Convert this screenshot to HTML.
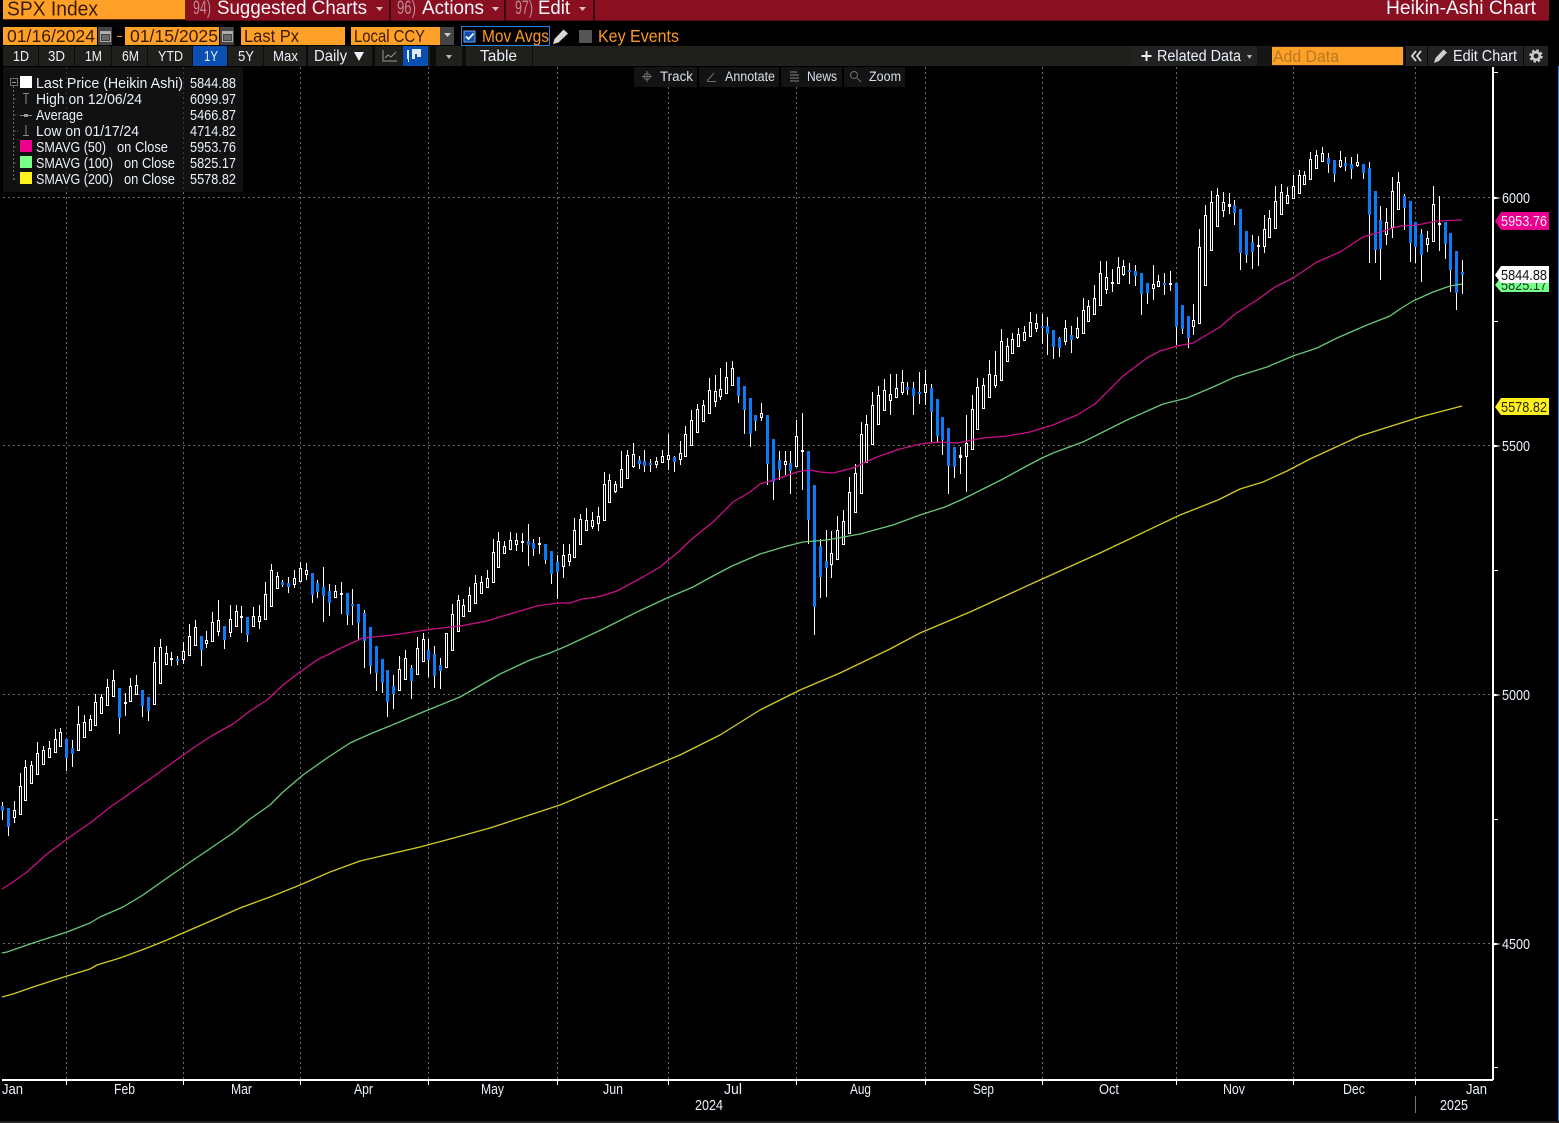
<!DOCTYPE html>
<html><head><meta charset="utf-8"><title>SPX Index Heikin-Ashi Chart</title>
<style>
html,body{margin:0;padding:0;background:#000;width:1559px;height:1123px;overflow:hidden}
svg{display:block;position:absolute;left:0;top:0}
text{font-family:"Liberation Sans",sans-serif;white-space:pre}
.l{fill:#eaf0fa;font-size:15px}
.d{fill:#3a1c00}
.o{fill:#ff9a1e}
.w{fill:#f8f8fc}
.n{fill:#b98a96}
</style></head><body>
<svg width="1559" height="1123" viewBox="0 0 1559 1123" xmlns="http://www.w3.org/2000/svg">
<rect width="1559" height="1123" fill="#000"/>
<!-- grid -->
<g stroke="#6a6a6a" stroke-width="1" stroke-dasharray="2 3" fill="none" shape-rendering="crispEdges">
<path d="M3 197.5H1493M3 445.5H1493M3 694.5H1493M3 943.5H1493"/>
<path d="M66.5 67V1079M183.5 67V1079M300.5 67V1079M428.5 67V1079M557.5 67V1079M668.5 67V1079M796.5 67V1079M925.5 67V1079M1042.5 67V1079M1176.5 67V1079M1293.5 67V1079M1415.5 67V1079"/>
</g>
<!-- candles -->
<g id="c" shape-rendering="crispEdges"></g>
<!-- moving averages -->
<g fill="none" stroke-width="1.3" stroke-linejoin="round">
<polyline stroke="#c9108a" points="2,889 13,882 27,872 47,854 67,839 90,823 113,805 125,797 137,788 153,777 172,763 193,748 213,735 233,724 250,711 267,700 283,685 300,672 317,660 343,647 363,638 393,635 413,632 433,629 460,626 487,621 503,616 537,606 557,603 570,603 582,599 598,597 617,591 643,577 660,567 677,553 693,538 713,522 733,502 750,492 760,484 780,478 797,472 810,470 820,472 833,473 853,468 877,457 900,449 920,444 940,442 957,443 983,438 1007,436 1030,432 1053,425 1077,415 1095,404 1123,376 1147,358 1160,351 1177,346 1193,343 1220,327 1235,314 1257,300 1275,287 1293,278 1317,262 1340,252 1363,237 1380,232 1400,226 1417,225 1437,221 1462,220"/>
<polyline stroke="#68c878" points="2,953 7,952 33,943 67,932 90,923 100,917 123,907 143,895 167,878 183,867 233,833 250,819 270,805 283,792 303,775 327,758 350,743 370,734 397,723 423,712 460,697 500,674 530,660 550,653 562,648 573,643 603,629 637,612 667,598 693,587 713,576 732,566 760,554 787,546 803,542 827,540 860,534 893,525 920,515 945,507 963,499 1003,479 1023,468 1040,459 1053,453 1083,442 1107,430 1127,420 1163,404 1187,398 1213,387 1235,377 1267,367 1293,356 1317,348 1337,338 1367,325 1390,316 1400,309 1413,301 1433,292 1450,286 1462,284"/>
<polyline stroke="#d2cc22" points="2,997 13,994 33,987 67,976 90,969 97,965 120,958 147,948 167,940 183,933 213,920 240,908 270,897 300,885 330,872 360,861 420,847 450,839 490,828 560,805 620,780 680,755 720,735 760,710 800,690 840,673 890,649 920,633 970,612 1040,580 1100,553 1180,515 1218,500 1240,489 1263,482 1287,471 1310,459 1360,436 1420,417 1462,406"/>
</g>
<!-- axes -->
<g fill="#fff" shape-rendering="crispEdges">
<rect x="1492" y="67" width="2" height="1013"/>
<rect x="2" y="1079" width="1491" height="2"/>
<path d="M66 1080h1v5h-1zM183 1080h1v5h-1zM300 1080h1v5h-1zM428 1080h1v5h-1zM557 1080h1v5h-1zM668 1080h1v5h-1zM796 1080h1v5h-1zM925 1080h1v5h-1zM1042 1080h1v5h-1zM1176 1080h1v5h-1zM1293 1080h1v5h-1zM1415 1080h1v5h-1z"/>
<path d="M1494 72h4v1h-4zM1494 321h4v1h-4zM1494 570h4v1h-4zM1494 819h4v1h-4zM1494 1067h4v1h-4z"/>
</g>
<path d="M1493 196.500l8 1.500-8 1.500z M1493 444.500l8 1.500-8 1.500z M1493 693.500l8 1.500-8 1.500z M1493 942.500l8 1.500-8 1.500z" fill="#fff"/>
<rect x="1415" y="1096" width="1" height="17" fill="#777"/>
<rect x="1558" y="66" width="1" height="1055" fill="#3d78b8"/>
<rect x="0" y="1121" width="1559" height="2" fill="#222"/>
<text class="l" x="1502" y="203" textLength="28" lengthAdjust="spacingAndGlyphs">6000</text>
<text class="l" x="1502" y="451" textLength="28" lengthAdjust="spacingAndGlyphs">5500</text>
<text class="l" x="1502" y="700" textLength="28" lengthAdjust="spacingAndGlyphs">5000</text>
<text class="l" x="1502" y="949" textLength="28" lengthAdjust="spacingAndGlyphs">4500</text>
<!-- badges -->
<path d="M1495 221l6-9h48v18h-48z" fill="#e8008f"/>
<text x="1501" y="226" font-size="15" fill="#ffe9f6" textLength="46" lengthAdjust="spacingAndGlyphs">5953.76</text>
<path d="M1495 285l6-8h48v15h-48z" fill="#78ff8a"/>
<text x="1501" y="290" font-size="15" fill="#1b3a20" textLength="46" lengthAdjust="spacingAndGlyphs">5825.17</text>
<path d="M1495 275l6-9h48v17h-48z" fill="#fff"/>
<text x="1501" y="280" font-size="15" fill="#111" textLength="46" lengthAdjust="spacingAndGlyphs">5844.88</text>
<path d="M1495 407l6-9h48v17h-48z" fill="#fff01e"/>
<text x="1501" y="412" font-size="15" fill="#2a2a00" textLength="46" lengthAdjust="spacingAndGlyphs">5578.82</text>
<!-- bottom labels -->
<g class="x">
<text class="l" x="2" y="1094" textLength="21" lengthAdjust="spacingAndGlyphs">Jan</text>
<text class="l" x="114" y="1094" textLength="21" lengthAdjust="spacingAndGlyphs">Feb</text>
<text class="l" x="231" y="1094" textLength="21" lengthAdjust="spacingAndGlyphs">Mar</text>
<text class="l" x="354" y="1094" textLength="19" lengthAdjust="spacingAndGlyphs">Apr</text>
<text class="l" x="481" y="1094" textLength="23" lengthAdjust="spacingAndGlyphs">May</text>
<text class="l" x="603" y="1094" textLength="20" lengthAdjust="spacingAndGlyphs">Jun</text>
<text class="l" x="724" y="1094" textLength="18" lengthAdjust="spacingAndGlyphs">Jul</text>
<text class="l" x="850" y="1094" textLength="21" lengthAdjust="spacingAndGlyphs">Aug</text>
<text class="l" x="973" y="1094" textLength="21" lengthAdjust="spacingAndGlyphs">Sep</text>
<text class="l" x="1099" y="1094" textLength="20" lengthAdjust="spacingAndGlyphs">Oct</text>
<text class="l" x="1223" y="1094" textLength="22" lengthAdjust="spacingAndGlyphs">Nov</text>
<text class="l" x="1343" y="1094" textLength="22" lengthAdjust="spacingAndGlyphs">Dec</text>
<text class="l" x="1466" y="1094" textLength="21" lengthAdjust="spacingAndGlyphs">Jan</text>
<text class="l" x="695" y="1110" textLength="28" lengthAdjust="spacingAndGlyphs">2024</text>
<text class="l" x="1440" y="1110" textLength="28" lengthAdjust="spacingAndGlyphs">2025</text>
</g>
<!-- legend -->
<rect x="3" y="67" width="240" height="125" rx="2" fill="#1b1b1b" fill-opacity=".62"/>
<g shape-rendering="crispEdges">
<rect x="10.500" y="78.500" width="7" height="7" fill="none" stroke="#707070"/><rect x="12" y="82" width="4" height="1" fill="#999"/>
<path d="M13.500 86V180M13.500 99H18M13.500 115H18M13.500 131H18M13.500 147H18M13.500 163H18M13.500 179H18" stroke="#666" stroke-dasharray="2 2" fill="none"/>
<rect x="20" y="76" width="12" height="12" fill="#fff"/>
<rect x="20" y="140" width="12" height="12" fill="#ee008c"/>
<rect x="20" y="156" width="12" height="12" fill="#78ff8a"/>
<rect x="20" y="172" width="12" height="12" fill="#fff01e"/>
<path d="M23 93.500h6M26 94v10" stroke="#888" fill="none"/>
<path d="M20 115.500h12" stroke="#888" fill="none"/><rect x="24" y="114" width="4" height="3" fill="#999"/>
<path d="M26 125v10M23 135.500h6" stroke="#888" fill="none"/>
</g>
<g>
<text class="l" x="36" y="88" textLength="147" lengthAdjust="spacingAndGlyphs">Last Price (Heikin Ashi)</text>
<text class="l" x="36" y="104" textLength="106" lengthAdjust="spacingAndGlyphs">High on 12/06/24</text>
<text class="l" x="36" y="120" textLength="47" lengthAdjust="spacingAndGlyphs">Average</text>
<text class="l" x="36" y="136" textLength="103" lengthAdjust="spacingAndGlyphs">Low on 01/17/24</text>
<text class="l" x="36" y="152" textLength="70" lengthAdjust="spacingAndGlyphs">SMAVG (50)</text>
<text class="l" x="117" y="152" textLength="51" lengthAdjust="spacingAndGlyphs">on Close</text>
<text class="l" x="36" y="168" textLength="77" lengthAdjust="spacingAndGlyphs">SMAVG (100)</text>
<text class="l" x="124" y="168" textLength="51" lengthAdjust="spacingAndGlyphs">on Close</text>
<text class="l" x="36" y="184" textLength="77" lengthAdjust="spacingAndGlyphs">SMAVG (200)</text>
<text class="l" x="124" y="184" textLength="51" lengthAdjust="spacingAndGlyphs">on Close</text>
<text class="l" x="190" y="88" textLength="46" lengthAdjust="spacingAndGlyphs">5844.88</text>
<text class="l" x="190" y="104" textLength="46" lengthAdjust="spacingAndGlyphs">6099.97</text>
<text class="l" x="190" y="120" textLength="46" lengthAdjust="spacingAndGlyphs">5466.87</text>
<text class="l" x="190" y="136" textLength="46" lengthAdjust="spacingAndGlyphs">4714.82</text>
<text class="l" x="190" y="152" textLength="46" lengthAdjust="spacingAndGlyphs">5953.76</text>
<text class="l" x="190" y="168" textLength="46" lengthAdjust="spacingAndGlyphs">5825.17</text>
<text class="l" x="190" y="184" textLength="46" lengthAdjust="spacingAndGlyphs">5578.82</text>
</g>
<!-- top red bar -->
<g shape-rendering="crispEdges">
<rect x="186" y="0" width="1363" height="20" fill="#8a0f20"/>
<rect x="186" y="20" width="1363" height="1" fill="#5a0a14"/>
<rect x="389" y="0" width="2" height="21" fill="#3a0810"/>
<rect x="504" y="0" width="2" height="21" fill="#3a0810"/>
<rect x="593" y="0" width="2" height="21" fill="#3a0810"/>
<rect x="3" y="0" width="183" height="20" fill="#5a3000"/>
<rect x="3" y="0" width="182" height="19" fill="#ffa028"/>
</g>
<text class="d" x="7" y="15.500" font-size="20.500" textLength="91" lengthAdjust="spacingAndGlyphs">SPX Index</text>
<text class="n" x="193" y="14" font-size="19.500" textLength="18" lengthAdjust="spacingAndGlyphs">94)</text>
<text class="w" x="217" y="14" font-size="19.500" textLength="150" lengthAdjust="spacingAndGlyphs">Suggested Charts</text>
<path d="M376 7h7l-3.500 4z" fill="#d8c0c6"/>
<text class="n" x="397" y="14" font-size="19.500" textLength="19" lengthAdjust="spacingAndGlyphs">96)</text>
<text class="w" x="422" y="14" font-size="19.500" textLength="62" lengthAdjust="spacingAndGlyphs">Actions</text>
<path d="M492 7h7l-3.500 4z" fill="#d8c0c6"/>
<text class="n" x="515" y="14" font-size="19.500" textLength="18" lengthAdjust="spacingAndGlyphs">97)</text>
<text class="w" x="538" y="14" font-size="19.500" textLength="32" lengthAdjust="spacingAndGlyphs">Edit</text>
<path d="M579 7h7l-3.500 4z" fill="#d8c0c6"/>
<text class="w" x="1386" y="14" font-size="19.500" textLength="150" lengthAdjust="spacingAndGlyphs">Heikin-Ashi Chart</text>
<!-- row 2 -->
<g shape-rendering="crispEdges">
<rect x="3" y="27" width="94" height="18" fill="#ffa028"/>
<rect x="98" y="27" width="14" height="18" fill="#444"/>
<rect x="125" y="27" width="94" height="18" fill="#ffa028"/>
<rect x="220" y="27" width="14" height="18" fill="#444"/>
<rect x="241" y="27" width="104" height="18" fill="#ffa028"/>
<rect x="351" y="27" width="89" height="18" fill="#ffa028"/>
<rect x="440" y="27" width="14" height="18" fill="#444"/>
<rect x="461.500" y="26.500" width="88" height="19" fill="#000" stroke="#2a7fd8"/>
<rect x="464" y="31" width="11" height="11" fill="#0b4fb0" stroke="#7aa8e0"/>
<rect x="579" y="30" width="13" height="13" fill="#555"/>
<rect x="117" y="36" width="5" height="1" fill="#ff9a1e"/>
<path d="M100.500 31.500h10v10h-10zM222.500 31.500h10v10h-10z" fill="none" stroke="#a8a8a8"/>
<path d="M101 32h9v2h-9zM223 32h9v2h-9z" fill="#b0b0b0"/>
<path d="M102 35h7v5h-7zM224 35h7v5h-7z" fill="#6a6a6a"/>
</g>
<text class="d" x="7" y="42" font-size="17.500" textLength="88" lengthAdjust="spacingAndGlyphs">01/16/2024</text>
<text class="d" x="130" y="42" font-size="17.500" textLength="88" lengthAdjust="spacingAndGlyphs">01/15/2025</text>
<text class="d" x="244" y="42" font-size="17.500" textLength="55" lengthAdjust="spacingAndGlyphs">Last Px</text>
<text class="d" x="354" y="42" font-size="17.500" textLength="71" lengthAdjust="spacingAndGlyphs">Local CCY</text>
<path d="M444 33h7l-3.500 4z" fill="#ccc"/>
<path d="M466 36.500l2.500 2.500 5-5.500" stroke="#fff" stroke-width="1.800" fill="none"/>
<text class="o" x="482" y="42" font-size="17.500" textLength="67" lengthAdjust="spacingAndGlyphs">Mov Avgs</text>
<path d="M553 44l1.500-5 9-9.500 4.500 4-9.500 9z" fill="#d8d8d8"/>
<text class="o" x="598" y="42" font-size="17.500" textLength="81" lengthAdjust="spacingAndGlyphs">Key Events</text>
<!-- row 3 -->
<g shape-rendering="crispEdges">
<rect x="3" y="46" width="1545" height="20" fill="#1f1f1c"/>
<path d="M38 46h1v20h-1zM74 46h1v20h-1zM111 46h1v20h-1zM147 46h1v20h-1zM192 46h1v20h-1zM227 46h1v20h-1zM263 46h1v20h-1zM306 46h2v20h-2zM372 46h3v20h-3zM430 46h6v20h-6zM462 46h4v20h-4zM532 46h1v20h-1z" fill="#0c0c0c"/>
<rect x="193" y="46" width="34" height="20" fill="#0a50b4"/>
<rect x="403" y="46" width="25" height="20" fill="#0a50b4"/>
<rect x="1133" y="46" width="124" height="20" fill="#222"/>
<rect x="1257" y="46" width="15" height="20" fill="#161616"/>
<rect x="1272" y="47" width="131" height="18" fill="#ffa028"/>
<rect x="1404" y="46" width="2" height="20" fill="#0c0c0c"/>
<rect x="1406" y="46" width="21" height="20" fill="#222"/>
<rect x="1427" y="46" width="1" height="20" fill="#0c0c0c"/>
<rect x="1428" y="46" width="95" height="20" fill="#222"/>
<rect x="1523" y="46" width="1" height="20" fill="#0c0c0c"/>
<rect x="1524" y="46" width="24" height="20" fill="#222"/>
</g>
<g>
<text class="l" x="13" y="61" textLength="16" lengthAdjust="spacingAndGlyphs">1D</text>
<text class="l" x="48" y="61" textLength="17" lengthAdjust="spacingAndGlyphs">3D</text>
<text class="l" x="85" y="61" textLength="17" lengthAdjust="spacingAndGlyphs">1M</text>
<text class="l" x="122" y="61" textLength="17" lengthAdjust="spacingAndGlyphs">6M</text>
<text class="l" x="158" y="61" textLength="25" lengthAdjust="spacingAndGlyphs">YTD</text>
<text class="l" x="204" y="61" textLength="14" lengthAdjust="spacingAndGlyphs">1Y</text>
<text class="l" x="238" y="61" textLength="16" lengthAdjust="spacingAndGlyphs">5Y</text>
<text class="l" x="273" y="61" textLength="25" lengthAdjust="spacingAndGlyphs">Max</text>
<text x="314" y="61" font-size="16" fill="#eaf0fa" textLength="33" lengthAdjust="spacingAndGlyphs">Daily</text>
<path d="M354 52h10l-5 9z" fill="#f0f4fa"/>
<path d="M383 50v11h14M385 58l3-3 3 2 5-5" stroke="#9a9a9a" fill="none"/>
<path d="M407 50h2v9h-2zM408 59h1v3h-1zM412 49h9v8h-4v-3h-2v5h-3z" fill="#dfe8f5"/>
<path d="M446 55h6l-3 4z" fill="#bbb"/>
<text x="480" y="61" font-size="16" fill="#eaf0fa" textLength="37" lengthAdjust="spacingAndGlyphs">Table</text>
<path d="M1146.500 51v10M1141.500 56h10" stroke="#eee" stroke-width="2"/>
<text x="1157" y="61" font-size="15.500" fill="#eaf0fa" textLength="84" lengthAdjust="spacingAndGlyphs">Related Data</text>
<path d="M1247 55h5l-2.500 4z" fill="#bbb"/>
<text x="1273" y="62" font-size="17" fill="#b57a20" textLength="66" lengthAdjust="spacingAndGlyphs">Add Data</text>
<path d="M1416 51l-4 5 4 5M1421 51l-4 5 4 5" stroke="#ddd" stroke-width="1.800" fill="none"/>
<path d="M1434 63l1.500-5 8-8.500 3.500 3-8 8.500z" fill="#cfcfcf"/>
<text x="1453" y="61" font-size="15.500" fill="#eaf0fa" textLength="64" lengthAdjust="spacingAndGlyphs">Edit Chart</text>
<circle cx="1536" cy="56" r="3.800" fill="none" stroke="#ccc" stroke-width="2.600"/>
<circle cx="1536" cy="56" r="5.700" fill="none" stroke="#ccc" stroke-width="2" stroke-dasharray="2.500 2"/>
</g>
<!-- floating toolbar -->
<g shape-rendering="crispEdges" fill="#161616" fill-opacity=".88">
<rect x="634" y="67" width="63" height="20"/><rect x="699" y="67" width="80" height="20"/><rect x="781" y="67" width="61" height="20"/><rect x="844" y="67" width="61" height="20"/>
</g>
<g stroke="#6e6e6e" fill="none">
<circle cx="647" cy="76.500" r="3"/><path d="M647 71v11M642 76.500h10"/>
<path d="M707 81l7-8M707 81.500h9"/>
<path d="M790 72h7M790 75h9M790 78h9M790 81h9" stroke-width="1.300"/>
<circle cx="854" cy="75" r="3.500"/><path d="M857 78l4 4"/>
</g>
<text x="660" y="81" font-size="13.500" fill="#d8e0ea" textLength="33" lengthAdjust="spacingAndGlyphs">Track</text>
<text x="725" y="81" font-size="13.500" fill="#d8e0ea" textLength="50" lengthAdjust="spacingAndGlyphs">Annotate</text>
<text x="807" y="81" font-size="13.500" fill="#d8e0ea" textLength="30" lengthAdjust="spacingAndGlyphs">News</text>
<text x="869" y="81" font-size="13.500" fill="#d8e0ea" textLength="32" lengthAdjust="spacingAndGlyphs">Zoom</text>
</svg>
<script>
var S=[
[0,540,"8,786,798,812,840,b 26,804,805,860,888,b 44,783,811,833,849,w 62,699,739,824,824,w 77,660,682,782,782,w 95,663,676,731,731,w 113,606,640,704,704,w 130,618,631,674,674,w 148,603,625,653,653,w 166,567,598,638,638,w 181,564,577,620,620,w 199,597,597,654,693,b 217,600,624,642,681,b 235,498,553,632,632,w 253,525,547,593,593,w 271,525,537,572,572,w 286,462,487,557,557,w 304,462,472,521,521,w 322,417,442,497,497,w 340,390,421,470,470,w 358,444,444,533,582,b 376,459,487,491,528,w 391,414,439,487,487,w 409,405,436,464,464,w 427,450,450,497,530,b 445,471,471,513,542,b 463,321,367,494,494,w 481,297,322,431,431,w 499,318,340,376,376,w 514,336,354,359,378,w 532,348,357,362,375,b 550,306,334,359,372,w 568,252,289,347,347,w 586,240,262,317,317,w 604,288,288,330,378,b 619,273,301,311,324,w 637,216,247,307,307,w 655,180,241,277,288,w 673,258,258,300,327,b 691,195,238,278,291,w 709,195,214,260,260,w 724,198,229,235,279,w 742,231,231,285,306,b 760,201,229,260,260,w 778,195,229,245,267,w 796,126,163,239,239,w 814,72,91,200,200,w 832,96,109,146,146,w 847,120,126,135,141,b 865,111,129,141,159,b 883,90,115,136,144,w 901,66,85,125,125,w 919,69,91,106,121,w 937,99,99,165,189,b 952,120,129,156,174,b 970,81,141,168,246,b 988,132,153,189,228,b 1006,135,153,173,174,w 1024,126,160,164,222,w 1042,159,159,225,255,b 1057,147,192,195,255,b 1075,192,192,249,300,b 1093,210,219,303,384,b 1111,261,261,378,402,b 1129,318,318,399,453,b 1147,357,357,429,459,b 1162,390,390,486,531,b 1180,405,438,462,507,b 1198,348,388,452,452,w 1216,330,355,419,419,w 1234,375,384,423,477,b 1252,291,325,404,404,w 1270,279,298,365,365,w 1285,297,330,360,411,b 1303,318,342,408,444,b 1321,354,375,393,447,b 1339,279,280,383,383,w 1357,192,223,332,332,w 1375,165,181,277,277,w"],
[460,350,"10,747,766,800,800,w 28,711,736,785,785,w 46,675,700,761,761,w 64,678,697,731,731,w 82,660,685,713,713,w 100,567,607,700,700,w 115,546,574,653,653,w 133,573,589,613,613,w 151,546,571,601,601,w 169,549,571,586,603,w 187,549,574,578,606,w 205,522,574,585,648,b 220,567,579,597,618,b 238,561,580,586,612,w 256,582,582,630,642,b 274,603,603,672,702,b 292,615,636,666,748,b 310,582,616,650,684,w 328,582,612,635,648,w 343,504,541,623,623,w 361,492,508,584,584,w 379,474,511,544,544,w 397,486,511,531,537,w 415,471,498,521,543,w 433,366,403,512,512,w 448,372,391,458,458,w 466,393,403,426,429,w 484,303,358,413,413,w 502,300,316,386,386,w 520,279,313,351,354,w 538,318,330,342,357,b 553,300,334,348,366,b 571,327,339,345,366,b 589,321,334,344,354,w 607,300,319,338,338,w 625,252,316,329,361,w 643,318,321,336,366,b 661,273,310,329,345,w 676,228,253,320,320,w 694,180,211,287,287,w 712,162,178,248,248,w 730,150,166,215,215,w 748,84,121,191,191,w 766,75,124,155,171,w 781,54,118,140,150,w 799,36,81,131,131,w 817,33,55,107,107,w 835,81,81,138,159,b 853,108,108,180,252,b 871,144,144,252,291,b 886,195,195,213,243,b 904,159,190,204,213,w 922,195,195,342,405,b 940,267,267,396,450,b 958,303,330,360,390,b 976,303,334,346,375,w 991,303,339,363,432,b 1009,210,259,350,350,w 1027,189,301,305,420,w 1045,303,303,510,582,b 1063,405,405,771,855,b 1081,567,588,681,744,b 1099,540,633,654,741,b 1114,543,610,644,684,w 1132,498,541,629,629,w 1150,480,514,584,584,w 1168,381,427,551,551,w 1186,342,370,488,488,w 1204,216,253,431,431,w 1219,195,223,340,340,w 1237,126,166,285,285,w 1255,108,136,224,224,w 1273,87,121,182,182,w 1291,72,133,152,195,w 1309,72,115,143,144,w 1327,60,97,129,135,w 1342,96,111,120,135,b 1360,96,114,138,195,b 1378,66,127,129,162,b"],
[920,130,"16,720,762,789,825,w 34,762,774,846,935,b 52,807,807,917,940,b 68,861,861,930,975,b 86,894,894,1008,1092,b 103,951,951,1011,1044,b 121,951,975,984,1032,w 139,855,940,980,1086,w 157,795,838,959,959,w 172,744,772,899,899,w 190,744,766,836,836,w 208,690,733,803,803,w 226,663,736,767,774,w 244,597,634,752,752,w 262,624,649,695,695,w 277,609,628,671,671,w 295,594,613,650,650,w 313,588,607,632,632,w 331,546,577,620,620,w 349,552,580,598,606,w 367,552,588,591,642,b 382,561,588,612,675,b 400,600,600,651,687,b 418,621,624,654,681,b 436,570,595,637,645,w 454,588,615,630,669,b 472,561,595,623,627,w 490,504,541,611,611,w 505,510,529,575,575,w 523,465,505,554,554,w 541,393,430,529,529,w 559,393,442,479,492,w 577,417,457,461,486,w 595,381,412,461,461,w 610,390,409,436,438,w 628,399,420,425,462,b 646,405,423,438,468,b 664,429,429,492,555,b 682,459,459,489,522,b 700,405,463,476,510,w 715,435,454,470,470,w 733,429,459,465,495,b 751,423,459,461,483,w 769,459,459,591,645,b 787,525,525,597,612,b 805,558,558,624,654,b 820,522,571,590,615,w 838,297,352,581,581,w 856,225,256,467,467,w 874,183,217,362,362,w 892,174,196,290,290,w 910,186,217,242,261,w 928,189,223,230,252,w 943,210,225,249,285,b 961,237,237,369,420,b 979,303,303,375,399,b 997,315,336,366,417,b 1015,318,346,350,408,w 1033,255,298,350,369,w 1048,240,265,323,323,w 1066,168,214,296,296,w 1084,162,187,254,254,w 1102,171,196,221,221,w 1120,135,169,208,208,w 1138,120,136,191,191,w 1153,123,136,164,164,w 1171,66,88,149,149,w 1189,60,76,118,118,w"],
[1280,130,"127,51,70,97,97,w 145,69,84,101,129,b 163,90,90,132,156,b 181,63,91,112,114,w 196,81,99,107,123,b 214,81,102,117,147,b 232,72,97,109,111,w 250,102,102,129,147,b 268,96,114,255,399,b 286,183,183,360,399,b 301,228,270,357,450,b 319,234,277,314,345,w 337,141,184,295,324,w 355,126,157,241,241,w 373,192,198,234,300,b 391,213,213,339,396,b 406,276,276,351,399,b 424,297,312,375,456,b 442,303,325,344,366,w 460,168,223,335,335,w 478,198,279,281,363,w 496,276,276,342,387,b 511,309,309,419,486,b 529,363,363,489,540,b 547,390,426,435,492,b"]
];
var h="";
S.forEach(function(s){
 s[2].split(" ").forEach(function(e){
  var p=e.split(","),x=Math.floor(s[0]+p[0]/3),y=function(v){return Math.round(s[1]+v/3)},
  wt=y(+p[1]),bt=y(+p[2]),bb=y(+p[3]),wb=y(+p[4]),blue=p[5]=="b";
  if(bb-bt<2)bb=bt+2;
  if(wb<bb)wb=bb;
  if(wt>bt)wt=bt;
  if(bt>wt)h+='<rect x="'+x+'" y="'+wt+'" width="1" height="'+(bt-wt)+'" fill="#fff"/>';
  if(wb>bb)h+='<rect x="'+x+'" y="'+bb+'" width="1" height="'+(wb-bb)+'" fill="#fff"/>';
  h+='<rect x="'+(x-1)+'" y="'+bt+'" width="3" height="'+(bb-bt)+'" fill="'+(blue?'#0a7cf5':'#fff')+'"/>';
  if(!blue&&bb-bt>3)h+='<rect x="'+x+'" y="'+(bt+1)+'" width="1" height="'+(bb-bt-2)+'" fill="#000"/>';
 });
});
document.getElementById("c").innerHTML=h;
</script>
</body></html>
